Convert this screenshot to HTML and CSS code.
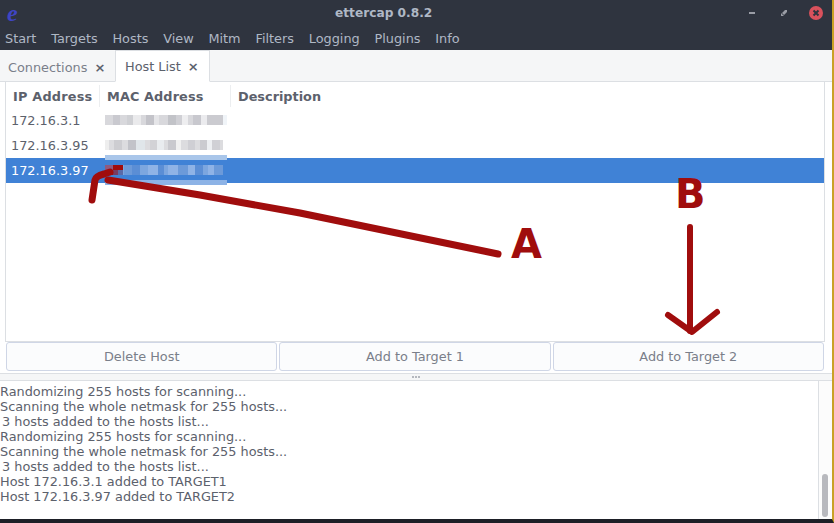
FILE: index.html
```html
<!DOCTYPE html>
<html lang="en">
<head>
<meta charset="utf-8">
<title>ettercap 0.8.2</title>
<link rel="stylesheet" href="styles.css">
</head>
<body>
<div class="window">
  <header class="head">
    <div class="titlebar">
      <span class="logo">e</span>
      <span class="title">ettercap 0.8.2</span>
      <div class="controls">
        <svg class="ctl" width="90" height="16" viewBox="0 0 90 16">
          <rect x="0" y="6" width="6" height="2" fill="#9a9da6"/>
          <path d="M33 7 L36 4 L38 4 L38 6 L35 9 Z M32 7 L32 10 L35 10 Z" fill="#9a9da6"/>
          <circle cx="67" cy="7" r="7" fill="#d9515c"/>
          <path d="M64.5 4.5 L69.5 9.5 M69.5 4.5 L64.5 9.5" stroke="#2f343f" stroke-width="2"/>
        </svg>
      </div>
    </div>
    <nav class="menubar">
      <span>Start</span><span>Targets</span><span>Hosts</span><span>View</span><span>Mitm</span><span>Filters</span><span>Logging</span><span>Plugins</span><span>Info</span>
    </nav>
  </header>
  <div class="tabs">
    <div class="tab">Connections<b class="x">×</b></div>
    <div class="tab active">Host List<b class="x">×</b></div>
  </div>
  <main class="pane">
    <div class="tree">
      <div class="row thead">
        <div class="c1">IP Address</div><div class="c2">MAC Address</div><div class="c3">Description</div>
      </div>
      <div class="row"><div class="c1 ip">172.16.3.1</div></div>
      <div class="row"><div class="c1 ip">172.16.3.95</div></div>
      <div class="row selected"><div class="c1 ip">172.16.3.97</div></div>
    </div>
    <div class="buttons">
      <button class="btn">Delete Host</button>
      <button class="btn">Add to Target 1</button>
      <button class="btn">Add to Target 2</button>
    </div>
  </main>
  <div class="grip"><i></i><i></i><i></i></div>
  <section class="log">
    <div class="logtext">
      <div>Randomizing 255 hosts for scanning...</div>
      <div>Scanning the whole netmask for 255 hosts...</div>
      <div class="indent">3 hosts added to the hosts list...</div>
      <div>Randomizing 255 hosts for scanning...</div>
      <div>Scanning the whole netmask for 255 hosts...</div>
      <div class="indent">3 hosts added to the hosts list...</div>
      <div>Host 172.16.3.1 added to TARGET1</div>
      <div>Host 172.16.3.97 added to TARGET2</div>
    </div>
    <div class="scroll"><div class="thumb"></div></div>
  </section>
  <svg class="blur" width="834" height="523" viewBox="0 0 834 523">
    <g>
      <rect x="105" y="115" width="122" height="10" fill="#d8d8dc"/>
      <rect x="113" y="115" width="7" height="10" fill="#c9c9cf"/>
      <rect x="127" y="115" width="6" height="10" fill="#cfd0d4"/>
      <rect x="133" y="115" width="8" height="10" fill="#eaeaec"/>
      <rect x="146" y="115" width="8" height="10" fill="#c3c3c9"/>
      <rect x="154" y="115" width="5" height="10" fill="#e5e5e8"/>
      <rect x="168" y="115" width="8" height="10" fill="#c2c3c8"/>
      <rect x="176" y="115" width="6" height="10" fill="#d0d0d5"/>
      <rect x="182" y="115" width="6" height="10" fill="#eeeef0"/>
      <rect x="193" y="115" width="8" height="10" fill="#c8c8ce"/>
      <rect x="201" y="115" width="6" height="10" fill="#ebebee"/>
      <rect x="207" y="115" width="16" height="10" fill="#cbcbd0"/>
      <rect x="223" y="115" width="4" height="10" fill="#f0f4f8"/>
      <rect x="105" y="140" width="118" height="10" fill="#dcdcdf"/>
      <rect x="105" y="140" width="4" height="10" fill="#eeeeee"/>
      <rect x="114" y="140" width="8" height="10" fill="#cdcdd1"/>
      <rect x="128" y="140" width="8" height="10" fill="#c2c3c9"/>
      <rect x="136" y="140" width="9" height="10" fill="#e0e6ea"/>
      <rect x="150" y="140" width="7" height="10" fill="#d2d2d6"/>
      <rect x="157" y="140" width="7" height="10" fill="#e9ecef"/>
      <rect x="168" y="140" width="8" height="10" fill="#c9c9ce"/>
      <rect x="176" y="140" width="5" height="10" fill="#f0f0f0"/>
      <rect x="188" y="140" width="7" height="10" fill="#cfcfd4"/>
      <rect x="200" y="140" width="7" height="10" fill="#cbcbd0"/>
      <rect x="207" y="140" width="5" height="10" fill="#edeff2"/>
      <rect x="212" y="140" width="8" height="10" fill="#d0d0d5"/>
      <rect x="105" y="155" width="122" height="5" fill="#a9c6ea"/>
      <rect x="105" y="165" width="118" height="10" fill="#7ca6df"/>
      <rect x="124" y="165" width="8" height="10" fill="#6c9ad9"/>
      <rect x="132" y="165" width="8" height="10" fill="#5b8ed5"/>
      <rect x="148" y="165" width="10" height="10" fill="#8fb3e6"/>
      <rect x="158" y="165" width="6" height="10" fill="#5b8ed5"/>
      <rect x="168" y="165" width="10" height="10" fill="#8fb3e6"/>
      <rect x="178" y="165" width="10" height="10" fill="#6c9ad9"/>
      <rect x="188" y="165" width="7" height="10" fill="#8fb3e6"/>
      <rect x="195" y="165" width="8" height="10" fill="#5b8ed5"/>
      <rect x="208" y="165" width="6" height="10" fill="#8fb3e6"/>
      <rect x="214" y="165" width="9" height="10" fill="#6c9ad9"/>
      <rect x="105" y="180" width="122" height="5" fill="#8db3e6"/>
      <rect x="105" y="165" width="8" height="5" fill="#8f5a80"/>
      <rect x="113" y="165" width="10" height="5" fill="#a00d0d"/>
      <rect x="105" y="170" width="8" height="5" fill="#a00d0d"/>
      <rect x="113" y="170" width="5" height="5" fill="#7a3b60"/>
      <rect x="118" y="170" width="5" height="5" fill="#5a6aa8"/>
    </g>
  </svg>
  <svg class="marks" width="834" height="523" viewBox="0 0 834 523">
    <g fill="none" stroke="#a00d0d" stroke-linecap="round" stroke-linejoin="round">
      <path d="M498 254 L300 213 L200 195 L108 180" stroke-width="7"/>
      <path d="M92 200 L95 180 Q96 176 104 174 L110 172" stroke-width="7"/>
      <path d="M690 227 V331" stroke-width="6"/>
      <path d="M668 315 L692 332 L717 312" stroke-width="6"/>
    </g>
  </svg>
  <span class="mark mark-a">A</span>
  <span class="mark mark-b">B</span>
</div>
</body>
</html>
```
FILE: styles.css
```css
* { box-sizing: border-box; }
html, body { margin: 0; padding: 0; width: 834px; height: 523px; overflow: hidden; background: #1d1f26; }
.window {
  position: relative; width: 834px; height: 523px; display: flex; flex-direction: column;
  font: 12.85px/15px "DejaVu Sans", sans-serif; color: #5c616c;
  background: #f5f6f7; border-right: 2px solid #c9a227; border-bottom: 4px solid #1d1f26;
}
.head { background: #2f343f; height: 50px; flex: none; display: flex; flex-direction: column; }
.titlebar { position: relative; height: 26px; display: flex; align-items: center; padding-left: 335px; }
.logo {
  position: absolute; left: 7px; top: 0;
  font: italic bold 24px/26px "Liberation Serif", serif; color: #3f45c4;
}
.title { color: #afb8c5; font-weight: bold; font-size: 12.2px; }
.controls { position: absolute; left: 749px; top: 6px; display: flex; }
.ctl { display: block; }
.menubar { height: 24px; display: flex; align-items: center; padding-left: 5px; gap: 14.8px; color: #afb8c5; }
.tabs { height: 32px; flex: none; display: flex; align-items: flex-end; border-bottom: 1px solid #dcdfe3; background: #f5f6f7; }
.tab { width: 115px; height: 31px; padding: 10px 0 0 8px; white-space: nowrap; color: #7a7f8a; }
.tab.active { width: 95px; padding: 8px 0 0 9px; background: #fff; color: #5c616c; border: 1px solid #dcdfe3; border-bottom: 1px solid #fff; margin-bottom: -1px; height: 32px; }
.x { font-size: 13px; line-height: 13px; margin-left: 7px; color: #5c616c; }
.pane { flex: none; height: 292px; padding: 0 7px 0 5px; display: flex; flex-direction: column; background: #fff; border-bottom: 1px solid #dcdfe3; }
.tree { height: 260px; flex: none; background: #fff; border: 1px solid #dcdfe3; border-top: 0; }
.row { display: flex; height: 25px; align-items: center; }
.thead { height: 26px; padding-top: 2px; font-weight: bold; color: #5c616c; }
.thead .c1 { width: 94px; padding-left: 7px; border-right: 1px solid #eceef0; height: 22px; line-height: 24px; letter-spacing: 0.2px; }
.thead .c2 { width: 131px; padding-left: 7px; border-right: 1px solid #eceef0; height: 22px; line-height: 24px; letter-spacing: 0.1px; }
.thead .c3 { padding-left: 7px; }
.ip { padding-left: 5px; }
.selected { background: #4082d6; color: #fff; }
.buttons { display: flex; gap: 2px; height: 30px; padding: 0 1px 0 1px; }
.btn {
  flex: 1 1 0; min-width: 0; height: 29px; font: inherit; color: #7a7f8a; background: #fbfcfd;
  border: 1px solid #cfd6e6; border-radius: 3px; padding: 0;
}
.grip { height: 7px; flex: none; display: flex; justify-content: center; align-items: center; gap: 1px; background: #f5f6f7; border-bottom: 1px solid #dcdfe3; }
.grip i { width: 2px; height: 2px; background: #b5b8bf; }
.log { flex: 1; display: flex; background: #fff; min-height: 0; }
.logtext { flex: 1; padding-top: 3px; white-space: nowrap; }
.indent { padding-left: 2px; }
.scroll { width: 14px; flex: none; background: #fcfcfc; border-left: 1px solid #dcdfe3; position: relative; }
.thumb { position: absolute; left: 3px; bottom: 2px; width: 6px; height: 43px; border-radius: 3px; background: #b8b9be; }
.blur, .marks { position: absolute; left: 0; top: 0; pointer-events: none; }
.mark { position: absolute; font: bold 40px/40px "DejaVu Sans", sans-serif; color: #a00d0d; }
.mark-a { left: 511px; top: 224px; }
.mark-b { left: 675px; top: 174px; }
```
